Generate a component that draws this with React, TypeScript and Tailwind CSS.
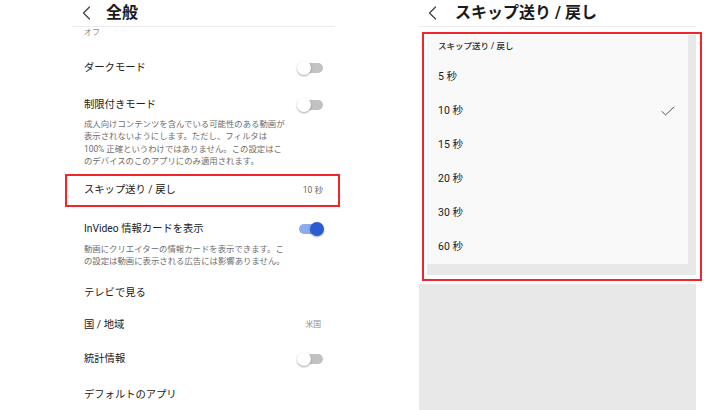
import React from 'react';

const FONT = { fontFamily: 'Roboto, "Noto Sans CJK JP", sans-serif' };

const Chevron = () => (
  <svg width="9" height="14" viewBox="0 0 9 14" fill="none">
    <polyline points="7.5,1 1.5,7 7.5,13" stroke="#444" strokeWidth="1.3" strokeLinecap="round" strokeLinejoin="round" />
  </svg>
);

const Toggle = ({ on = false }: { on?: boolean }) => (
  <div className="relative w-[26px] h-[14px] flex items-center">
    <div className={`ml-[2px] w-[24px] h-[10px] rounded-full ${on ? 'bg-[#8cacec]' : 'bg-[#c2c2c2]'}`} />
    <div
      className={`absolute top-0 w-[14px] h-[14px] rounded-full shadow-[0_1px_2px_rgba(0,0,0,0.35)] ${
        on ? 'right-[-1px] bg-[#2a5bd0]' : 'left-0 bg-white'
      }`}
    />
  </div>
);

const Row = ({ label, right, className = '' }: { label: string; right?: React.ReactNode; className?: string }) => (
  <div className={`h-[28px] pl-[19px] pr-[17px] flex items-center justify-between ${className}`}>
    <span className="text-[10.3px] text-[#202020]">{label}</span>
    {right}
  </div>
);

const GeneralPanel = () => (
  <div className="ml-[65px] w-[275px] flex flex-col">
    <div className="h-[27px] ml-[7px] mr-[5px] border-b border-[#ececec] flex items-center gap-[15px] pl-[10px]">
      <Chevron />
      <span className="text-[16px] font-bold text-[#1a1a1a] leading-none">全般</span>
    </div>
    <div className="h-[12px] pl-[19px] flex items-center text-[8px] text-[#8a8a8a]">オフ</div>

    <Row label="ダークモード" right={<Toggle />} className="mt-[15px]" />
    <Row label="制限付きモード" right={<Toggle />} className="mt-[9px]" />
    <p className="pl-[19px] pr-[12px] mt-[-1px] text-[8.4px] leading-[12.4px] text-[#6e6e6e]">
      成人向けコンテンツを含んでいる可能性のある動画が
      <br />
      表示されないようにします。ただし、フィルタは
      <br />
      100% 正確というわけではありません。この設定はこ
      <br />
      のデバイスのこのアプリにのみ適用されます。
    </p>

    <div className="mt-[6px] h-[33px] border-2 border-[#f0262c] pl-[17px] pr-[15px] flex items-center justify-between">
      <span className="text-[10.3px] text-[#202020]">スキップ送り / 戻し</span>
      <span className="text-[8.5px] text-[#6a6a6a]">10 秒</span>
    </div>

    <Row label="InVideo 情報カードを表示" right={<Toggle on />} className="mt-[8px] h-[24px]" />
    <p className="pl-[19px] pr-[12px] text-[8.4px] leading-[12.5px] text-[#6e6e6e]">
      動画にクリエイターの情報カードを表示できます。こ
      <br />
      の設定は動画に表示される広告には影響ありません。
    </p>

    <Row label="テレビで見る" className="mt-[11px]" />
    <Row label="国 / 地域" right={<span className="text-[7.8px] text-[#8a8a8a] mr-[2px]">米国</span>} className="mt-[4px]" />
    <Row label="統計情報" right={<Toggle />} className="mt-[6px]" />
    <Row label="デフォルトのアプリ" className="mt-[8px]" />
  </div>
);

const options = ['5 秒', '10 秒', '15 秒', '20 秒', '30 秒', '60 秒'];

const SkipPanel = () => (
  <div className="ml-[70px] w-[292px] flex flex-col">
    <div className="h-[28px] ml-[9px] mr-[6px] border-b border-[#ececec] flex items-center gap-[18px] pl-[9px]">
      <Chevron />
      <span className="text-[16px] font-bold text-[#1a1a1a] leading-none">スキップ送り / 戻し</span>
    </div>

    <div className="mt-[5px] ml-[12px] h-[249px] border-2 border-[#f0262c] bg-white pl-[3px] pt-[1px] pr-[4px] pb-[4px]">
      <div className="h-full bg-[#e8e8e8] pr-[8px] pb-[11px]">
        <div className="h-full bg-[#f9f9f9] flex flex-col">
          <div className="mt-[2px] h-[20px] pl-[11px] flex items-center text-[8.5px] font-medium text-[#2a2a2a]">
            スキップ送り / 戻し
          </div>
          <div className="mt-[4px] flex flex-col">
            {options.map((o) => (
              <div key={o} className="h-[34px] pl-[11px] pr-[13px] flex items-center justify-between">
                <span className="text-[10.5px] text-[#202020]">{o}</span>
                {o === '10 秒' && (
                  <svg width="14" height="10" viewBox="0 0 14 10" fill="none">
                    <polyline points="1,5.5 4.5,9 13,1" stroke="#555" strokeWidth="1" strokeLinecap="round" strokeLinejoin="round" />
                  </svg>
                )}
              </div>
            ))}
          </div>
        </div>
      </div>
    </div>

    <div className="mt-[3px] ml-[9px] w-[277px] h-[130px] bg-[#e8e8e8]" />
  </div>
);

export default function App() {
  return (
    <div className="w-[728px] h-[410px] bg-white overflow-hidden flex" style={FONT}>
      <GeneralPanel />
      <SkipPanel />
    </div>
  );
}
